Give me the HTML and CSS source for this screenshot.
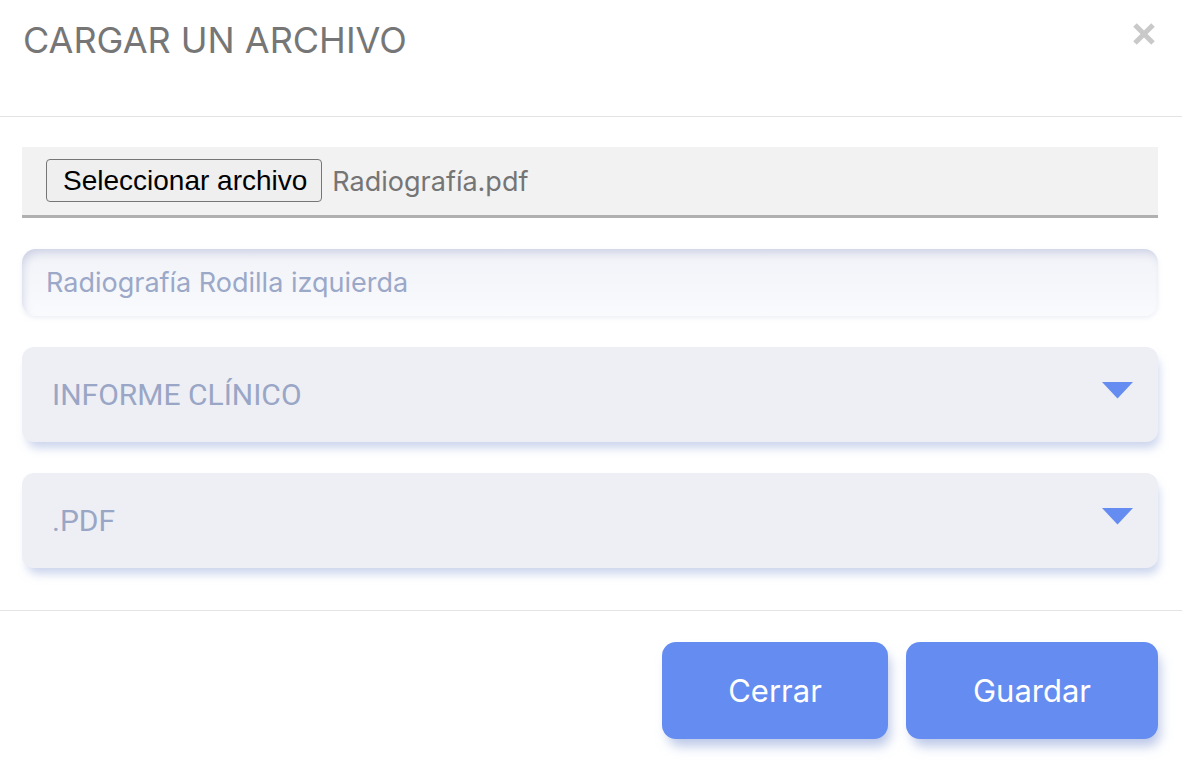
FILE: index.html
```html
<!DOCTYPE html>
<html lang="es">
<head>
<meta charset="utf-8">
<title>Cargar un archivo</title>
<link rel="stylesheet" href="styles.css">
</head>
<body>
<div class="modal">
  <div class="modal-header">
    <h1 class="modal-title">CARGAR UN ARCHIVO</h1>
    <button class="close-btn" aria-label="Cerrar">
      <svg width="24" height="22" viewBox="0 0 24 22"><path d="M3 2 L21 20 M21 2 L3 20" stroke="#c9c9c9" stroke-width="5" fill="none"/></svg>
    </button>
  </div>
  <div class="modal-body">
    <div class="file-box">
      <span class="file-btn">Seleccionar archivo</span>
      <span class="file-name">Radiografía.pdf</span>
    </div>
    <div class="text-input">
      <span class="placeholder">Radiografía Rodilla izquierda</span>
    </div>
    <div class="select">
      <span class="select-value">INFORME CLÍNICO</span>
      <svg class="caret" width="31" height="17" viewBox="0 0 31 17"><path d="M0 0 H31 L15.5 16.5 Z" fill="#658cf0"/></svg>
    </div>
    <div class="select">
      <span class="select-value">.PDF</span>
      <svg class="caret" width="31" height="17" viewBox="0 0 31 17"><path d="M0 0 H31 L15.5 16.5 Z" fill="#658cf0"/></svg>
    </div>
  </div>
  <div class="modal-footer">
    <button class="btn btn-close">Cerrar</button>
    <button class="btn btn-save">Guardar</button>
  </div>
</div>
</body>
</html>
```
FILE: styles.css
```css
* { box-sizing: border-box; }
html, body { margin: 0; padding: 0; background: #fff; }
body { font-family: Inter, "Liberation Sans", sans-serif; width: 1182px; height: 760px; overflow: hidden; }

.modal { width: 1182px; background: #fff; }

.modal-header {
  height: 117px;
  border-bottom: 1.5px solid #e4e4e4;
  display: flex;
  justify-content: space-between;
  align-items: flex-start;
  padding: 0 26px 0 23px;
}
.modal-title {
  margin: 18px 0 0 0;
  font-family: Inter, "Liberation Sans", sans-serif;
  font-weight: 400;
  font-size: 36px;
  line-height: 44px;
  color: #767676;
  letter-spacing: 0;
}
.close-btn {
  margin-top: 23px;
  border: 0;
  background: none;
  padding: 0;
  width: 24px;
  height: 22px;
  display: flex;
}

.modal-body {
  padding: 30px 24px 42px 22px;
  display: flex;
  flex-direction: column;
  gap: 31px;
}

.file-box {
  height: 71px;
  background: #f2f2f2;
  border-bottom: 3px solid #b0b0b0;
  display: flex;
  align-items: center;
  padding: 0 24px;
  gap: 10px;
}
.file-btn {
  font-family: "Liberation Sans", Arial, sans-serif;
  font-size: 28px;
  color: #000;
  background: #efefef;
  border: 1.5px solid #767676;
  border-radius: 4px;
  height: 43px;
  padding: 0 14px 0 16px;
  display: flex;
  align-items: center;
  margin-top: -1px;
}
.file-name {
  font-size: 27px;
  color: #757575;
}

.text-input {
  height: 67px;
  border-radius: 14px;
  background: linear-gradient(180deg, #f2f3f8 0%, #f6f7fb 60%, #fafbfd 100%);
  box-shadow: inset 3px 6px 10px -3px rgba(150, 160, 200, 0.45), 0 2px 4px rgba(220,224,236,0.5);
  display: flex;
  align-items: center;
  padding: 0 24px;
}
.placeholder {
  font-size: 27px;
  color: #9ba8c8;
}

.select {
  height: 95px;
  border-radius: 12px;
  background: #eeeff5;
  box-shadow: 3px 8px 10px -2px rgba(170, 185, 225, 0.6);
  display: flex;
  align-items: center;
  justify-content: space-between;
  padding: 0 25px 0 30px;
}
.select-value {
  font-family: Roboto, Inter, sans-serif;
  font-size: 30px;
  color: #9aa6c5;
}
.caret { margin-top: -9px; }

.modal-footer {
  border-top: 1.5px solid #e4e4e4;
  padding: 31px 24px 0 0;
  display: flex;
  justify-content: flex-end;
  gap: 18px;
}
.btn {
  height: 97px;
  border: 0;
  border-radius: 14px;
  background: #658cf0;
  color: #fff;
  font-family: Inter, "Liberation Sans", sans-serif;
  font-size: 31px;
  box-shadow: 4px 9px 12px -2px rgba(140, 160, 215, 0.6);
}
.btn-close { width: 226px; }
.btn-save { width: 252px; }
```
